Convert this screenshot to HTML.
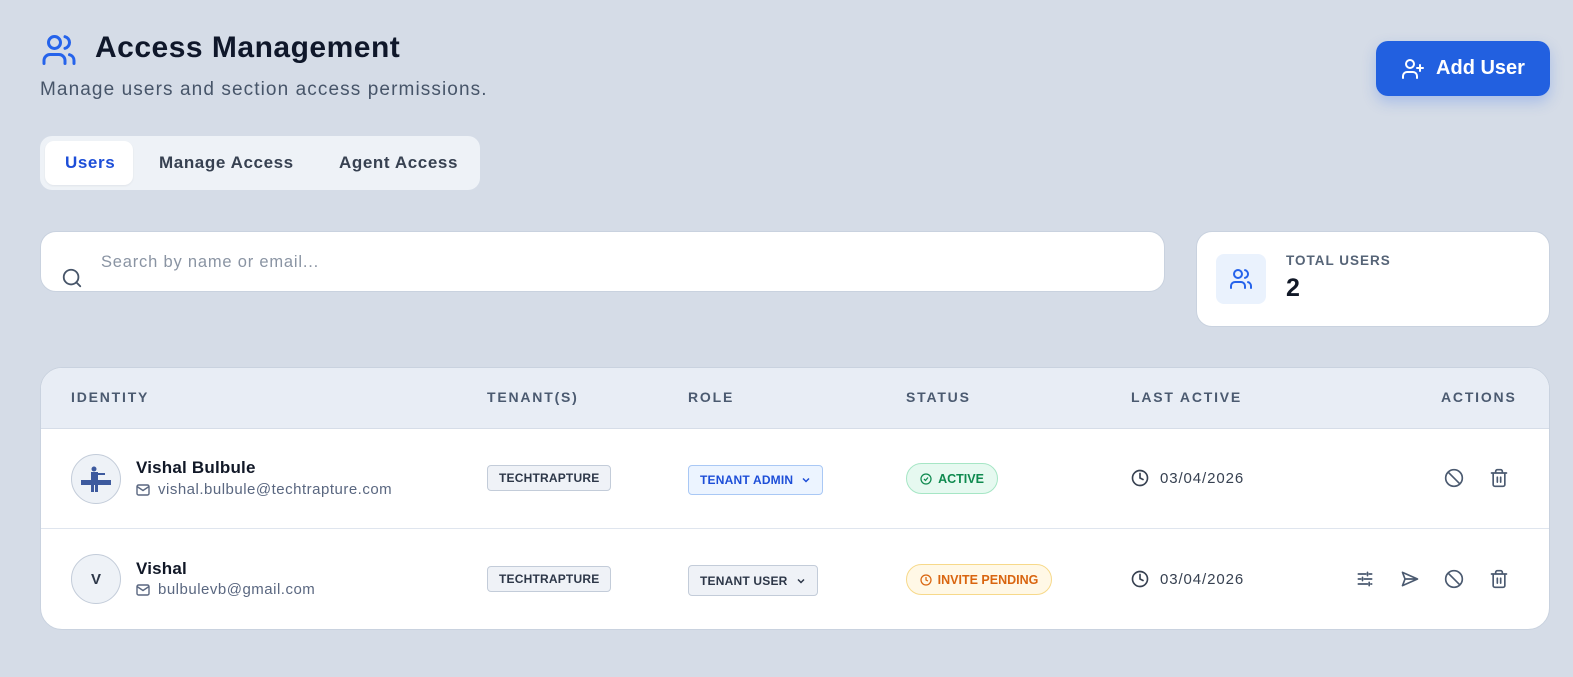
<!DOCTYPE html>
<html><head><meta charset="utf-8"><style>
*{box-sizing:border-box;margin:0;padding:0}
body{width:1573px;height:677px;background:#d5dce7;font-family:"Liberation Sans",sans-serif;position:relative;overflow:hidden;color:#111827}
.abs{position:absolute}
svg{display:block}
.th{position:absolute;top:389px;font-size:14px;font-weight:bold;letter-spacing:1.8px;color:#4b5a70}
.badge{position:absolute;border:1px solid #c3ccd9;background:#eff2f7;border-radius:4px;font-size:12px;font-weight:bold;color:#2d3748;display:flex;align-items:center;padding:0 11px;letter-spacing:.2px}
.name{position:absolute;left:136px;font-size:17px;font-weight:bold;color:#111827;letter-spacing:.2px}
.email{position:absolute;left:136px;font-size:15px;color:#5a6780;display:flex;align-items:center;gap:8px;letter-spacing:.5px}
.date{position:absolute;left:1131px;font-size:15px;color:#374151;display:flex;align-items:center;gap:11px;letter-spacing:.9px}
.ic{position:absolute}
.tab{position:absolute;top:153px;font-size:17px;font-weight:bold;letter-spacing:.6px}
</style></head><body>
<svg class="abs" style="left:40px;top:32px" width="38" height="36" viewBox="0 0 24 24" fill="none" stroke="#2563eb" stroke-width="2" stroke-linecap="round" stroke-linejoin="round"><path d="M16 21v-2a4 4 0 0 0-4-4H6a4 4 0 0 0-4 4v2"/><circle cx="9" cy="7" r="4"/><path d="M22 21v-2a4 4 0 0 0-3-3.87"/><path d="M16 3.13a4 4 0 0 1 0 7.75"/></svg>
<div class="abs" style="left:95px;top:31px;font-size:30px;font-weight:bold;color:#0f172a;letter-spacing:.5px">Access Management</div>
<div class="abs" style="left:40px;top:79px;font-size:19px;color:#475569;letter-spacing:1.1px">Manage users and section access permissions.</div>

<div class="abs" style="left:40px;top:136px;width:440px;height:54px;background:#eef2f7;border-radius:12px"></div>
<div class="abs" style="left:45px;top:141px;width:88px;height:44px;background:#fff;border-radius:9px;box-shadow:0 1px 2px rgba(0,0,0,.06)"></div>
<div class="tab" style="left:65px;color:#1d4ed8">Users</div>
<div class="tab" style="left:159px;color:#374151">Manage Access</div>
<div class="tab" style="left:339px;color:#374151">Agent Access</div>

<div class="abs" style="left:1376px;top:41px;width:174px;height:55px;background:#2260e0;border-radius:12px;box-shadow:0 6px 14px rgba(37,99,235,.25);display:flex;align-items:center;justify-content:center;gap:11px;color:#fff;font-size:20px;font-weight:bold">
<svg width="24" height="24" viewBox="0 0 24 24" fill="none" stroke="#fff" stroke-width="2" stroke-linecap="round"><path d="M16 21v-2a4 4 0 0 0-4-4H6a4 4 0 0 0-4 4v2"/><circle cx="9" cy="7" r="4"/><path d="M19 8v6M22 11h-6"/></svg>Add User</div>

<div class="abs" style="left:40px;top:231px;width:1125px;height:61px;background:#fff;border-radius:16px;border:1px solid #c9d2df"></div>
<svg class="abs" style="left:61px;top:267px" width="22" height="22" viewBox="0 0 24 24" fill="none" stroke="#475569" stroke-width="2" stroke-linecap="round"><circle cx="11" cy="11" r="8"/><path d="m21 21-4.3-4.3"/></svg>
<div class="abs" style="left:101px;top:253px;font-size:16.5px;color:#8a94a3;letter-spacing:.8px">Search by name or email...</div>

<div class="abs" style="left:1196px;top:231px;width:354px;height:96px;background:#fff;border-radius:16px;border:1px solid #c9d2df"></div>
<div class="abs" style="left:1216px;top:254px;width:50px;height:50px;background:#eaf2fd;border-radius:8px;display:flex;align-items:center;justify-content:center">
<svg width="24" height="24" viewBox="0 0 24 24" fill="none" stroke="#2563eb" stroke-width="2" stroke-linecap="round"><path d="M16 21v-2a4 4 0 0 0-4-4H6a4 4 0 0 0-4 4v2"/><circle cx="9" cy="7" r="4"/><path d="M22 21v-2a4 4 0 0 0-3-3.87"/><path d="M16 3.13a4 4 0 0 1 0 7.75"/></svg></div>
<div class="abs" style="left:1286px;top:253px;font-size:13.5px;font-weight:bold;letter-spacing:1px;color:#566477">TOTAL USERS</div>
<div class="abs" style="left:1286px;top:274px;font-size:25px;font-weight:bold;color:#111827">2</div>

<div class="abs" style="left:40px;top:367px;width:1510px;height:263px;background:#fff;border-radius:22px;border:1px solid #c9d2df;overflow:hidden">
<div style="height:61px;background:#e8edf5;border-bottom:1px solid #d6dde8"></div>
<div style="height:100px;border-bottom:1px solid #dfe5ee"></div>
</div>
<div class="th" style="left:71px">IDENTITY</div>
<div class="th" style="left:487px">TENANT(S)</div>
<div class="th" style="left:688px">ROLE</div>
<div class="th" style="left:906px">STATUS</div>
<div class="th" style="left:1131px">LAST ACTIVE</div>
<div class="th" style="left:1441px">ACTIONS</div>

<!-- row1 -->
<div class="abs" style="left:71px;top:454px;width:50px;height:50px;border-radius:50%;background:#eef2f7;border:1px solid #c3ccd9;display:flex;align-items:center;justify-content:center">
<svg width="34" height="30" viewBox="0 0 34 30"><circle cx="15" cy="5" r="2.5" fill="#3d5a9e"/><rect x="12" y="8" width="7" height="10" fill="#3d5a9e"/><rect x="18" y="9" width="8" height="2" fill="#3d5a9e"/><rect x="2" y="16" width="30" height="5" fill="#3d5a9e"/><rect x="12" y="21" width="3" height="7" fill="#3d5a9e"/><rect x="16" y="21" width="3" height="7" fill="#3d5a9e"/></svg></div>
<div class="name" style="top:458px">Vishal Bulbule</div>
<div class="email" style="top:481px"><svg width="14" height="12" viewBox="0 0 14 12" fill="none" stroke="#5a6780" stroke-width="1.4"><rect x="1" y="1" width="12" height="10" rx="1.5"/><path d="m1 2.5 6 4 6-4"/></svg>vishal.bulbule@techtrapture.com</div>
<div class="badge" style="left:487px;top:465px;height:26px">TECHTRAPTURE</div>
<div class="badge" style="left:688px;top:465px;height:30px;background:#ecf4ff;border-color:#a9c8f5;color:#1d4ed8">TENANT ADMIN<svg style="margin-left:8px" width="10" height="10" viewBox="0 0 10 10" fill="none" stroke="#1d4ed8" stroke-width="1.5"><path d="m2 3.5 3 3 3-3"/></svg></div>
<div class="abs" style="left:906px;top:463px;width:92px;height:31px;border-radius:16px;background:#e6f9f0;border:1px solid #a6e6c5;display:flex;align-items:center;justify-content:center;gap:6px;color:#0f8a4f;font-size:12.5px;font-weight:bold">
<svg width="12" height="12" viewBox="0 0 24 24" fill="none" stroke="#0f8a4f" stroke-width="2.5"><circle cx="12" cy="12" r="10"/><path d="m8 12 3 3 5-6"/></svg>ACTIVE</div>
<div class="date" style="top:469px"><svg width="18" height="18" viewBox="0 0 24 24" fill="none" stroke="#374151" stroke-width="2.2" stroke-linecap="round"><circle cx="12" cy="12" r="10"/><path d="M12 6v6l4 2"/></svg>03/04/2026</div>
<svg class="ic" style="left:1444px;top:468px" width="20" height="20" viewBox="0 0 24 24" fill="none" stroke="#4b5a70" stroke-width="2"><circle cx="12" cy="12" r="10"/><path d="m4.9 4.9 14.2 14.2"/></svg>
<svg class="ic" style="left:1489px;top:468px" width="20" height="20" viewBox="0 0 24 24" fill="none" stroke="#4b5a70" stroke-width="2" stroke-linecap="round"><path d="M3 6h18M19 6v14a2 2 0 0 1-2 2H7a2 2 0 0 1-2-2V6M8 6V4a2 2 0 0 1 2-2h4a2 2 0 0 1 2 2v2M10 11v6M14 11v6"/></svg>

<!-- row2 -->
<div class="abs" style="left:71px;top:554px;width:50px;height:50px;border-radius:50%;background:#eef2f7;border:1px solid #c3ccd9;display:flex;align-items:center;justify-content:center;font-size:15px;font-weight:bold;color:#2d3748">V</div>
<div class="name" style="top:559px">Vishal</div>
<div class="email" style="top:581px"><svg width="14" height="12" viewBox="0 0 14 12" fill="none" stroke="#5a6780" stroke-width="1.4"><rect x="1" y="1" width="12" height="10" rx="1.5"/><path d="m1 2.5 6 4 6-4"/></svg>bulbulevb@gmail.com</div>
<div class="badge" style="left:487px;top:566px;height:26px">TECHTRAPTURE</div>
<div class="badge" style="left:688px;top:565px;height:31px">TENANT USER<svg style="margin-left:8px" width="10" height="10" viewBox="0 0 10 10" fill="none" stroke="#2d3748" stroke-width="1.5"><path d="m2 3.5 3 3 3-3"/></svg></div>
<div class="abs" style="left:906px;top:564px;width:146px;height:31px;border-radius:16px;background:#fff8e6;border:1px solid #f7d98a;display:flex;align-items:center;justify-content:center;gap:6px;color:#d9650f;font-size:12.5px;font-weight:bold">
<svg width="12" height="12" viewBox="0 0 24 24" fill="none" stroke="#d9650f" stroke-width="2.5"><circle cx="12" cy="12" r="10"/><path d="M12 6v6l4 2"/></svg>INVITE PENDING</div>
<div class="date" style="top:570px"><svg width="18" height="18" viewBox="0 0 24 24" fill="none" stroke="#374151" stroke-width="2.2" stroke-linecap="round"><circle cx="12" cy="12" r="10"/><path d="M12 6v6l4 2"/></svg>03/04/2026</div>
<svg class="ic" style="left:1355px;top:569px" width="20" height="20" viewBox="0 0 24 24" fill="none" stroke="#4b5a70" stroke-width="2" stroke-linecap="round"><path d="M4 6h9M17 6h3M15 4v4M4 12h3M11 12h9M9 10v4M4 18h11M19 18h1M17 16v4"/></svg>
<svg class="ic" style="left:1400px;top:569px" width="20" height="20" viewBox="0 0 24 24" fill="none" stroke="#4b5a70" stroke-width="2" stroke-linejoin="round"><path d="M3 4l18 8-18 8 3-8z M6 12h15"/></svg>
<svg class="ic" style="left:1444px;top:569px" width="20" height="20" viewBox="0 0 24 24" fill="none" stroke="#4b5a70" stroke-width="2"><circle cx="12" cy="12" r="10"/><path d="m4.9 4.9 14.2 14.2"/></svg>
<svg class="ic" style="left:1489px;top:569px" width="20" height="20" viewBox="0 0 24 24" fill="none" stroke="#4b5a70" stroke-width="2" stroke-linecap="round"><path d="M3 6h18M19 6v14a2 2 0 0 1-2 2H7a2 2 0 0 1-2-2V6M8 6V4a2 2 0 0 1 2-2h4a2 2 0 0 1 2 2v2M10 11v6M14 11v6"/></svg>
</body></html>
